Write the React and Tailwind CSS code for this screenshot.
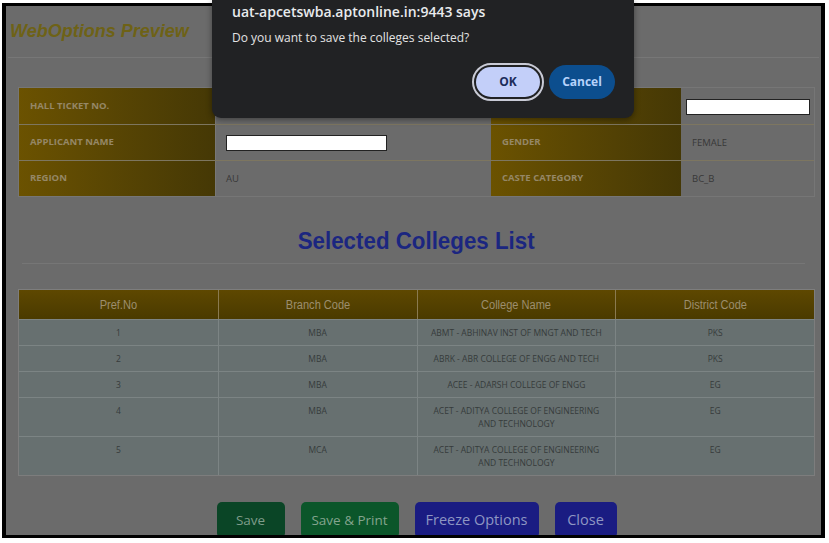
import React from "react";

const infoRows = [
  ["HALL TICKET NO.", "input-none", "", "input2"],
  ["APPLICANT NAME", "input", "GENDER", "FEMALE"],
  ["REGION", "AU", "CASTE CATEGORY", "BC_B"],
];

const colleges = [
  ["1", "MBA", ["ABMT - ABHINAV INST OF MNGT AND TECH"], "PKS"],
  ["2", "MBA", ["ABRK - ABR COLLEGE OF ENGG AND TECH"], "PKS"],
  ["3", "MBA", ["ACEE - ADARSH COLLEGE OF ENGG"], "EG"],
  ["4", "MBA", ["ACET - ADITYA COLLEGE OF ENGINEERING", "AND TECHNOLOGY"], "EG"],
  ["5", "MCA", ["ACET - ADITYA COLLEGE OF ENGINEERING", "AND TECHNOLOGY"], "EG"],
];

const gold = "bg-gradient-to-r from-[#6b5200] to-[#453805]";

function Label({ children, w }) {
  return (
    <div
      className={`${w} ${gold} h-full flex items-center pl-[11px] text-[9.5px] font-bold text-[#958766]`}
    >
      {children}
    </div>
  );
}

export default function App() {
  return (
    <div
      className="relative w-[829px] h-[543px] bg-white overflow-hidden pt-[3px] pl-[2px]"
      style={{ fontFamily: "'Open Sans', 'Noto Sans', sans-serif" }}
    >
      <div className="w-[823px] h-[535px] border-x-4 border-y-[3px] border-black bg-[#6b6b6b] overflow-hidden">
        {/* Header */}
        <div className="h-[52px] flex items-center pl-[2px] mx-[2px] border-b border-[#777]">
          <span
            className="text-[18px] font-bold italic text-[#6e6216]"
            style={{ fontFamily: "'Liberation Sans', Arial, sans-serif" }}
          >
            WebOptions Preview
          </span>
        </div>

        {/* Info table */}
        <div className="mt-[29px] ml-[12px] w-[797px] border border-[#767676]">
          {infoRows.map((r, i) => (
            <div key={i} className={`h-[36px] flex ${i > 0 ? "border-t border-[#7d7660]" : ""}`}>
              <Label w="w-[196px]">{r[0]}</Label>
              <div className="w-[276px] h-full flex items-center pl-[10px] pt-[1px] text-[9.5px] text-[#383838] border-l border-[#777]">
                {r[1] === "input" ? (
                  <div className="w-[161px] h-[16px] bg-white border border-[#222]" />
                ) : r[1] === "input-none" ? null : (
                  r[1]
                )}
              </div>
              {i === 0 ? (
                <div className={`w-[190px] h-full ${gold}`} />
              ) : (
                <Label w="w-[190px]">{r[2]}</Label>
              )}
              <div className="flex-1 h-full flex items-center pl-[11px] pt-[1px] text-[9.5px] text-[#383838]">
                {r[3] === "input2" ? (
                  <div className="w-[124px] h-[16px] -ml-[6px] bg-white border border-[#222]" />
                ) : (
                  r[3]
                )}
              </div>
            </div>
          ))}
        </div>

        {/* Selected Colleges List heading */}
        <div className="mt-[30px] mx-[16px] pb-[8px] border-b border-[#767676] flex justify-center">
          <span
            className="inline-block text-[24px] font-bold text-[#1b2680] leading-[28px] scale-x-[0.93] pl-[6px]"
            style={{ fontFamily: "'Liberation Sans', Arial, sans-serif" }}
          >
            Selected Colleges List
          </span>
        </div>

        {/* Colleges table */}
        <div className="mt-[25px] ml-[12px] w-[797px] border border-[#7d7d7d]">
          <div
            className="grid grid-cols-4 h-[29px] bg-gradient-to-b from-[#5e4800] to-[#4a3a00] text-[12px] text-[#9c8e6e]"
            style={{ fontFamily: "'Liberation Sans', Arial, sans-serif" }}
          >
            {["Pref.No", "Branch Code", "College Name", "District Code"].map((h, i) => (
              <div
                key={h}
                className={`flex items-center justify-center ${i > 0 ? "border-l border-[#8a7a50]" : ""}`}
              >
                <span className="inline-block scale-x-[0.92]">{h}</span>
              </div>
            ))}
          </div>
          {colleges.map((r, i) => (
            <div key={i} className="grid grid-cols-4 bg-[#677070] border-t border-[#7c8484] text-[8.5px] text-[#363b3b]">
              {[0, 1, 2, 3].map((c) => (
                <div
                  key={c}
                  className={`flex flex-col items-center pt-[6px] pb-[6px] leading-[13px] ${c > 0 ? "border-l border-[#7c8484]" : ""}`}
                >
                  {c === 2 ? r[2].map((l) => <span key={l}>{l}</span>) : <span>{r[c]}</span>}
                </div>
              ))}
            </div>
          ))}
        </div>

        {/* Buttons */}
        <div className="mt-[26px] flex justify-center gap-[16px] pl-[6px] text-[13.5px]">
          <div className="w-[68px] h-[36px] rounded-[5px] bg-[#0a4526] text-[#7f9c8a] flex items-center justify-center">
            Save
          </div>
          <div className="w-[98px] h-[36px] rounded-[5px] bg-[#0b562a] text-[#84a48e] flex items-center justify-center">
            Save &amp; Print
          </div>
          <div className="w-[124px] h-[36px] rounded-[5px] bg-[#1a1c82] text-[#8e96c2] text-[14.5px] flex items-center justify-center">
            Freeze Options
          </div>
          <div className="w-[62px] h-[36px] rounded-[5px] bg-[#1a1c82] text-[#8e96c2] text-[14.5px] flex items-center justify-center">
            Close
          </div>
        </div>
      </div>

      {/* Dialog */}
      <div className="absolute left-[212px] top-0 w-[422px] h-[118px] bg-[#212224] rounded-b-[9px] shadow-[0_2px_6px_rgba(0,0,0,0.4)]">
        <div className="pl-[20px] pt-[2px] text-[14px] font-semibold text-[#e8eaed] leading-[20px]">
          uat-apcetswba.aptonline.in:9443 says
        </div>
        <div className="pl-[20px] mt-[8px] text-[12px] text-[#e3e3e3] leading-[16px]">
          Do you want to save the colleges selected?
        </div>
        <div className="mt-[17px] flex justify-end pr-[19px] gap-[5px]">
          <div className="w-[72px] h-[38px] rounded-full border-2 border-[#c9cbd6] p-[2px] bg-[#212224]">
            <div className="w-full h-full rounded-full bg-[#c3cff9] flex items-center justify-center text-[12px] font-bold text-[#1b2c59]">
              OK
            </div>
          </div>
          <div className="w-[66px] h-[34px] mt-[2px] rounded-full bg-[#0c4e8e] flex items-center justify-center text-[12px] font-bold text-[#b6d2fb]">
            Cancel
          </div>
        </div>
      </div>
    </div>
  );
}
